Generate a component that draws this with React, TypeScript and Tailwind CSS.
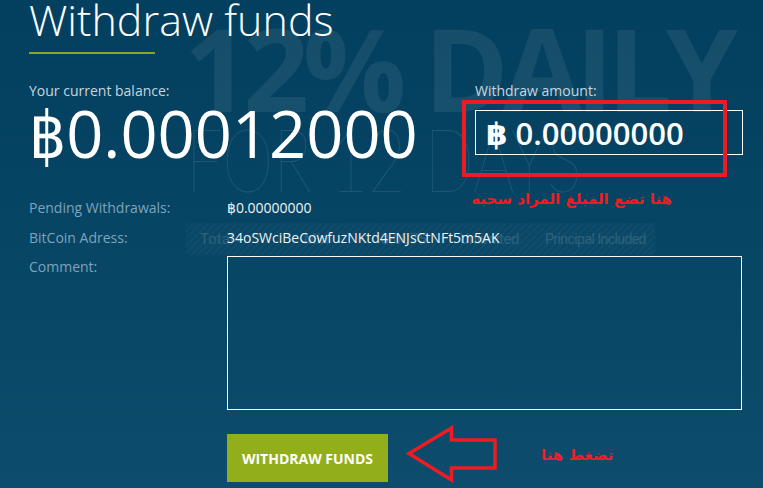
import React from "react";

export default function App() {
  return (
    <div className="relative w-[763px] h-[488px] overflow-hidden bg-gradient-to-b from-[#033f5e] to-[#0d4c6c] font-['Open_Sans','DejaVu_Sans',sans-serif]">
      {/* background watermark */}
      <div className="pointer-events-none absolute inset-0 select-none">
        <div className="absolute left-[184px] top-[10px] whitespace-nowrap text-[115px] font-bold leading-[115px] tracking-[-0.055em] text-white/[0.075]">
          12% DAILY
        </div>
        <div className="absolute left-[186px] top-[114px] origin-left scale-x-[0.74] whitespace-nowrap font-['Lato',sans-serif] text-[88px] font-thin leading-[88px] text-white/[0.1]">
          FOR 12 DAYS
        </div>
        <div className="absolute left-[186px] top-[223px] flex h-[32px] w-[469px] items-center whitespace-nowrap bg-[repeating-linear-gradient(135deg,rgba(255,255,255,0.035)_0px,rgba(255,255,255,0.035)_2px,rgba(255,255,255,0.012)_2px,rgba(255,255,255,0.012)_5px)] font-['Roboto',sans-serif] text-[15px] text-white/[0.13]">
          <span className="ml-[14px]">Total</span>
          <span className="ml-[70px]">Min</span>
          <span className="ml-[52px]">0.0075</span>
          <span className="ml-[33px] tracking-[-0.03em]">Unlimited</span>
          <span className="ml-[26px] text-[14px] tracking-[-0.04em]">Principal Included</span>
        </div>
      </div>

      {/* content */}
      <div className="relative pl-[29px]">
        <h1 className="mt-[-1px] text-[43px] font-light leading-[42px] text-white">Withdraw funds</h1>
        <div className="mt-[11px] h-[2px] w-[126px] bg-[#8fa61c]" />

        <div className="mt-[27px] flex">
          <div className="w-[446px]">
            <div className="text-[14px] leading-[20px] text-[#c7d5de]">Your current balance:</div>
            <div className="h-[64px] whitespace-nowrap text-[65px] leading-[64px] text-white">
              <span className="font-['DejaVu_Sans_Condensed','DejaVu_Sans',sans-serif] font-light leading-none">฿</span>0.00012000
            </div>
          </div>
          <div>
            <div className="text-[14px] leading-[20px] text-[#c7d5de]">Withdraw amount:</div>
            <div className="mt-[9px] box-border h-[45px] w-[268px] overflow-hidden whitespace-nowrap border border-white pl-[10px] pt-[2px] text-[31px] font-semibold leading-[41px] text-white">
              ฿ 0.00000000
            </div>
          </div>
        </div>

        <div className="mt-[27px] text-[14px]">
          <div className="flex h-[30px] items-center">
            <div className="w-[198px] text-[#7ea3bb]">Pending Withdrawals:</div>
            <div className="text-[#eef3f6]">฿0.00000000</div>
          </div>
          <div className="flex h-[30px] items-center">
            <div className="w-[198px] text-[#7ea3bb]">BitCoin Adress:</div>
            <div className="text-[#eef3f6]">34oSWciBeCowfuzNKtd4ENJsCtNFt5m5AK</div>
          </div>
          <div className="flex">
            <div className="w-[198px] leading-[30px] text-[#7ea3bb]">Comment:</div>
            <div className="mt-[4px] h-[154px] w-[515px] border border-white" />
          </div>
        </div>

        <div className="mt-[24px] flex items-start pl-[198px]">
          <button className="flex h-[48px] w-[161px] items-center justify-center bg-[#93ae1b] text-[14px] font-bold text-white">
            WITHDRAW FUNDS
          </button>
          <svg className="ml-[18px] mt-[-9px]" width="92" height="58" viewBox="0 0 92 58">
            <polygon
              points="3,28.5 45.5,3 45.5,15 89,15 89,43 45.5,43 45.5,55"
              fill="none"
              stroke="#ed1c24"
              strokeWidth="3.5"
              strokeLinejoin="miter"
            />
          </svg>
          <div dir="rtl" className="ml-[43px] mt-[11px] font-['DejaVu_Sans',sans-serif] text-[15px] font-bold leading-[20px] text-[#e8222a]">
            تضغط هنا
          </div>
        </div>
      </div>

      {/* annotations */}
      <div className="pointer-events-none absolute left-[462px] top-[100px] h-[77px] w-[265px] border-[4px] border-[#ed1c24]" />
      <div dir="rtl" className="absolute left-[472px] top-[189px] w-[200px] whitespace-nowrap text-right font-['DejaVu_Sans',sans-serif] text-[15px] font-bold leading-[20px] text-[#ed1c24]">
        هنا تضع المبلغ المراد سحبه
      </div>
    </div>
  );
}
